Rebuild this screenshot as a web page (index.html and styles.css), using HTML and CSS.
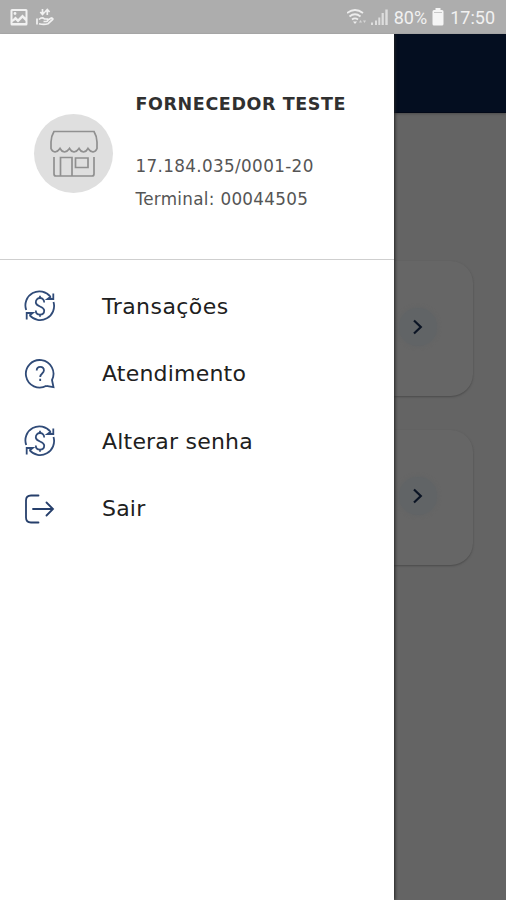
FILE: index.html
```html
<!DOCTYPE html>
<html lang="pt-BR">
<head>
<meta charset="utf-8">
<title>Menu</title>
<link rel="stylesheet" href="styles.css">
</head>
<body>
<div class="status">
  <svg class="status-photo" width="18" height="17" viewBox="0 0 18 17"><path fill="#f1f1f1" fill-rule="evenodd" d="M2 0h14a1.500 1.500 0 0 1 1.500 1.500v13.500a1.500 1.500 0 0 1-1.500 1.500h-14a1.500 1.500 0 0 1-1.500-1.500v-13.500a1.500 1.500 0 0 1 1.500-1.500zM2.500 2v8.500l3-3 2.500 2.500 4.500-4.500 3 3v-6.500zM2.500 13v1h13v-2l-3-3-4.500 4.500-2.500-2.500z"/><circle cx="5" cy="4.500" r="1.400" fill="#f1f1f1"/></svg>
  <svg class="status-hand" width="18" height="18" viewBox="0 0 18 18"><path d="M6.500 1v5M4.300 4l2.200 2.500 2.200-2.500M11.300 7v-5M9 4l2.300-2.500 2.300 2.500M1 10.500v6M3 11.500q3-3 5.500-.5h3q1 2-1 2.500h-3M11 12.500l4.500-2.500q2 .3 1 1.700l-4.500 4q-4 1.500-9 0" fill="none" stroke="#f1f1f1" stroke-width="1.700"/></svg>
  <span class="spacer"></span>
  <svg class="status-wifi" width="22" height="18" viewBox="0 0 22 18"><path d="M0 5q8-6 16 0M2.500 8.500q5.500-4.500 11 0M5 11.500q3-2.200 6 0" fill="none" stroke="#ededed" stroke-width="1.800"/><path d="M6 13.500h4l-2 2.500z" fill="#ededed"/><path d="M12 14.500l1.500-2.500 1.500 2.500zM16 12.500h3l-1.500 2.500z" fill="#d5d5d5"/></svg>
  <svg class="status-signal" width="18" height="18" viewBox="0 0 18 18"><path fill="#dedede" d="M0 14.500h2v2.500h-2zM4 12.500h2v4.500h-2zM7.300 9.500h2v7.500h-2zM10.600 5h2.200v12h-2.200zM14.300 1.500h2.400v15.500h-2.400z"/></svg>
  <span class="pct">80%</span>
  <svg class="status-battery" width="12" height="18" viewBox="0 0 12 18"><path fill="#f5f5f5" d="M3.500 0h5v2h1.500a1.500 1.500 0 0 1 1.500 1.500v12.500a1.500 1.500 0 0 1-1.500 1.500h-8a1.500 1.500 0 0 1-1.500-1.500v-12.500a1.500 1.500 0 0 1 1.500-1.500h1.500z"/><path stroke="#c8c8c8" d="M2 4.500h8"/></svg>
  <span class="clock">17:50</span>
</div>
<div class="stage">
  <div class="page">
    <div class="appbar"></div>
    <div class="cards">
      <div class="card"><span class="halo"><svg width="12" height="16" viewBox="0 0 12 16"><path d="M2 1.500l6.800 6.500-6.800 6.500"/></svg></span></div>
      <div class="card"><span class="halo"><svg width="12" height="16" viewBox="0 0 12 16"><path d="M2 1.500l6.800 6.500-6.800 6.500"/></svg></span></div>
    </div>
  </div>
  <aside class="drawer">
    <header class="profile">
      <div class="avatar">
        <svg width="50" height="48" viewBox="0 0 50 48"><path d="M5 1.500h40q3 5 3 10.500v6.500q-1 3-4 3.500-3-.5-5-3.500-1.500 3-4.500 3.500-3-.5-4.500-3.500-2 3-5 3.500-3-.5-4.500-3.500-2 3-5 3.500-3-.5-4.500-3.500-2 3-5 3.500-3-.5-4-3.500v-6.500q0-5.500 3-10.500zM5 27v17q0 2 2 2h36q2 0 2-2v-17M11.500 46v-18.500h11.500v18.500M26.500 28h12.500v9.500h-12.500z"/></svg>
      </div>
      <div class="who">
        <h1>FORNECEDOR TESTE</h1>
        <p class="doc">17.184.035/0001-20</p>
        <p class="term">Terminal: 00044505</p>
      </div>
    </header>
    <nav>
      <a class="item"><svg class="icon" width="32" height="32" viewBox="0 0 32 32"><path d="M2.200 20A14 14 0 0 1 26.500 6.800M29.500 12A14 14 0 0 1 5.500 25.200M29.300 3.500v5.500h-5.800l3.500-2.500M2.700 29.500v-6.500h6l-3.200 2.500M20.200 12.500c0-6-8.400-6-8.400 0 0 4.500 8.400 3.500 8.400 8 0 5.500-8.400 5.500-8.400 0M16 5.800v2.500M16 24.200v2.500"/></svg><span>Transações</span></a>
      <a class="item"><svg class="icon" width="32" height="32" viewBox="0 0 32 32"><path d="M22.500 27.800A13.800 13.800 0 1 1 28 22L29.500 29.200L25 28.300L22.500 27.800M12.700 12.500c0-4.800 7.200-4.800 7.200 0 0 3-3.700 3-3.700 6.500M16.200 20.800v2.200"/></svg><span>Atendimento</span></a>
      <a class="item"><svg class="icon" width="32" height="32" viewBox="0 0 32 32"><path d="M2.200 20A14 14 0 0 1 26.500 6.800M29.500 12A14 14 0 0 1 5.500 25.200M29.300 3.500v5.500h-5.800l3.500-2.500M2.700 29.500v-6.500h6l-3.200 2.500M20.200 12.500c0-6-8.400-6-8.400 0 0 4.500 8.400 3.500 8.400 8 0 5.500-8.400 5.500-8.400 0M16 5.800v2.500M16 24.200v2.500"/></svg><span>Alterar senha</span></a>
      <a class="item"><svg class="icon exit" width="32" height="32" viewBox="0 0 32 32"><path d="M14.500 2.500h-7.500q-5 0-5 5v17q0 5 5 5h7.500M9 16h20M22.500 9.500l6.500 6.500-6.500 6.500"/></svg><span>Sair</span></a>
    </nav>
  </aside>
</div>
</body>
</html>
```
FILE: styles.css
```css
* { box-sizing: border-box; }
body { margin: 0; width: 506px; height: 900px; overflow: hidden; display: flex; flex-direction: column; font-family: "DejaVu Sans", Verdana, sans-serif; background: #646464; }
.status { height: 34px; flex: none; background: #adadad; display: flex; align-items: center; padding: 0 11px 0 10px; color: #f1f1f1; font-family: Roboto, sans-serif; font-size: 18px; }
.status svg { flex: none; }
.status-hand { margin-left: 8px; }
.spacer { flex: 1; }
.status-signal { margin-left: 2px; }
.pct { margin-left: 5px; }
.status-battery { margin-left: 5px; }
.clock { margin-left: 6px; }
.stage { position: relative; flex: 1; }
.page { height: 100%; background: #646464; }
.appbar { height: 79px; background: #040e20; border-bottom: 1px solid #020817; box-shadow: 0 1px 2px #4b4b4b; }
.cards { display: flex; flex-direction: column; gap: 34px; padding: 148px 33px 0; }
.card { height: 135px; border-radius: 22px; background: #666; box-shadow: 0 1px 2px #4b4b4b; display: flex; align-items: center; justify-content: flex-end; padding: 0 36px 3px 0; }
.halo { width: 38px; height: 38px; border-radius: 50%; background: #616466; box-shadow: 0 0 4px #616466; display: flex; align-items: center; justify-content: center; }
.halo path { fill: none; stroke: #0b1424; stroke-width: 2.2; }
.drawer { position: absolute; left: 0; top: 0; bottom: 0; width: 394px; background: #fff; box-shadow: 1px 0 3px #222; clip-path: inset(0 -8px 0 0); }
.profile { height: 226px; border-bottom: 1px solid #cfcfcf; display: flex; padding-left: 34px; }
.avatar { width: 79px; height: 79px; margin-top: 80px; border-radius: 50%; background: #dfdfdf; display: flex; align-items: center; justify-content: center; }
.avatar path { fill: none; stroke: #909090; stroke-width: 1.7; }
.who { margin-left: 22.5px; padding-top: 58px; white-space: nowrap; }
h1, p { margin: 0; }
h1 { font-size: 17.5px; line-height: 24px; letter-spacing: 0.6px; color: #303030; }
p { font-size: 16.8px; line-height: 24px; color: #555; }
.doc { margin-top: 38px; letter-spacing: .35px; }
.term { margin-top: 9px; letter-spacing: .3px; }
nav { padding-top: 12.5px; }
.item { height: 67.5px; display: flex; align-items: center; padding-left: 24px; font-size: 22px; color: #202020; }
.item span { margin-left: 46px; white-space: nowrap; letter-spacing: .2px; }
.item:first-child span { letter-spacing: .45px; }
.icon path { fill: none; stroke: #304b78; stroke-width: 1.8; }
.icon.exit path { stroke: #263f6b; stroke-width: 1.8; stroke-linecap: round; }
```
